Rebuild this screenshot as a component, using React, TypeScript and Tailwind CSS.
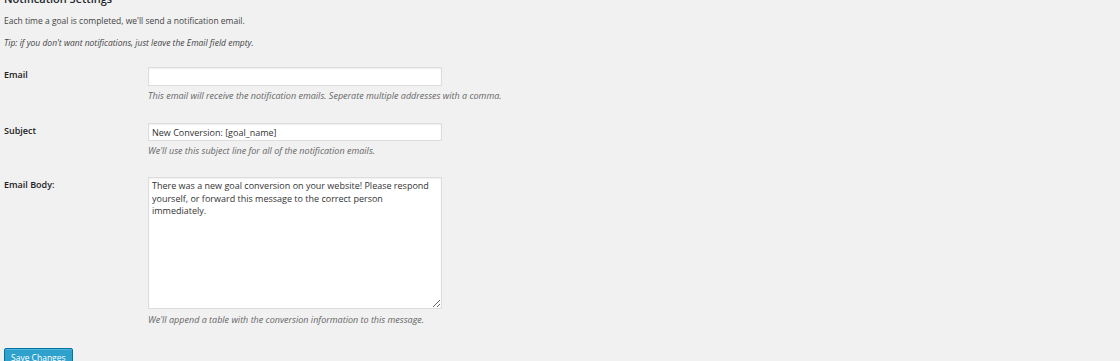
export default function App() {
  return (
    <div className="min-h-screen w-full overflow-hidden bg-[#f1f1f1] pl-[4px] text-[#444] [font-family:'Open_Sans',sans-serif]">
      <h3 className="mt-[-9px] text-[11px] font-semibold leading-[16px] text-[#23282d]">Notification Settings</h3>
      <p className="mt-[7px] text-[8.5px] leading-[14px]">
        Each time a goal is completed, we&apos;ll send a notification email.
      </p>
      <p className="mt-[8px] text-[8.5px] italic leading-[14px]">
        Tip: if you don&apos;t want notifications, just leave the Email field empty.
      </p>

      <div className="mt-[17px] grid grid-cols-[144px_1fr]">
        <label className="text-[9px] font-semibold leading-[16px] text-[#222]">Email</label>
        <div>
          <input
            type="text"
            className="block h-[19px] w-[294px] border border-[#ddd] bg-white px-[3px] text-[9px] shadow-[inset_0_1px_2px_rgba(0,0,0,0.07)] outline-none"
          />
          <p className="mt-[3px] text-[9px] italic leading-[14px] text-[#666]">
            This email will receive the notification emails. Seperate multiple addresses with a comma.
          </p>
        </div>
      </div>

      <div className="mt-[20px] grid grid-cols-[144px_1fr]">
        <label className="text-[9px] font-semibold leading-[16px] text-[#222]">Subject</label>
        <div>
          <input
            type="text"
            defaultValue="New Conversion: [goal_name]"
            className="block h-[18px] w-[294px] border border-[#ddd] bg-white px-[3px] text-[9px] text-[#333] shadow-[inset_0_1px_2px_rgba(0,0,0,0.07)] outline-none"
          />
          <p className="mt-[3px] text-[9px] italic leading-[14px] text-[#666]">
            We&apos;ll use this subject line for all of the notification emails.
          </p>
        </div>
      </div>

      <div className="mt-[19px] grid grid-cols-[144px_1fr]">
        <label className="text-[9px] font-semibold leading-[16px] text-[#222]">Email Body:</label>
        <div>
          <textarea
            defaultValue="There was a new goal conversion on your website! Please respond yourself, or forward this message to the correct person immediately."
            className="block h-[132px] w-[294px] resize-y border border-[#ddd] bg-white px-[3px] pt-[2px] text-[9px] leading-[12.5px] text-[#333] shadow-[inset_0_1px_2px_rgba(0,0,0,0.07)] outline-none"
          />
          <p className="mt-[4px] text-[9px] italic leading-[14px] text-[#666]">
            We&apos;ll append a table with the conversion information to this message.
          </p>
        </div>
      </div>

      <button
        type="button"
        className="mt-[21px] h-[20px] rounded-[2px] border border-[#0074a2] bg-[#2ea2cc] px-[6px] text-[8.5px] leading-[18px] text-white shadow-[inset_0_1px_0_rgba(120,200,230,0.5)]"
      >
        Save Changes
      </button>
    </div>
  );
}
